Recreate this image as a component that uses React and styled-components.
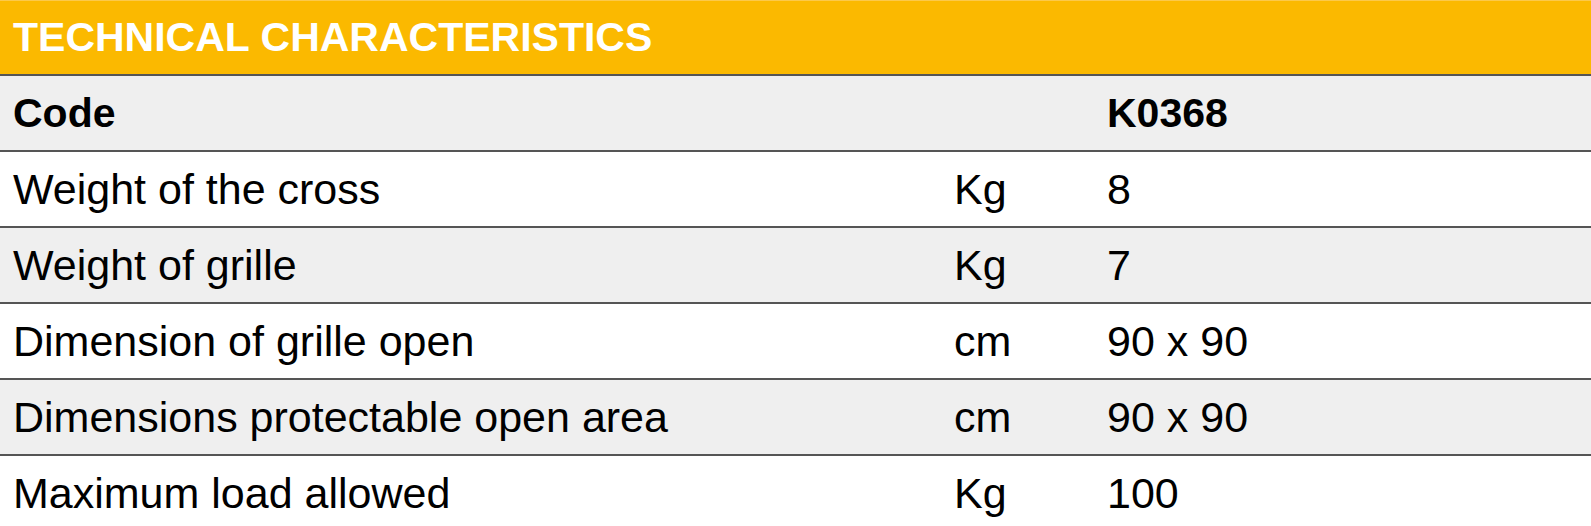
import React from 'react'
import styled, { createGlobalStyle } from 'styled-components'

const Global = createGlobalStyle`
  html, body {
    margin: 0;
    padding: 0;
    background: #ffffff;
  }
`

const Table = styled.div`
  width: 100%;
  font-family: "Liberation Sans", Arial, sans-serif;
  color: #000;
  border-top: 1px solid #fcc94a;
`

const Title = styled.div`
  height: 73px;
  background: #fbb900;
  border-bottom: 2px solid #555;
  display: flex;
  align-items: center;
  padding-left: 13px;
  color: #fff;
  font-weight: 700;
  font-size: 41px;
  line-height: 1;
`

const Row = styled.div`
  display: grid;
  grid-template-columns: 941px 153px 1fr;
  align-items: center;
  height: 74px;
  padding-left: 13px;
  background: ${({ $shade }) => ($shade ? '#efefef' : '#ffffff')};
  border-bottom: ${({ $last }) => ($last ? 'none' : '2px solid #555')};
  font-size: ${({ $bold }) => ($bold ? '41px' : '43px')};
  font-weight: ${({ $bold }) => ($bold ? 700 : 400)};
  line-height: 1;
`

const Cell = styled.span`
  white-space: nowrap;
`

const rows = [
  ['Weight of the cross', 'Kg', '8'],
  ['Weight of grille', 'Kg', '7'],
  ['Dimension of grille open', 'cm', '90 x 90'],
  ['Dimensions protectable open area', 'cm', '90 x 90'],
  ['Maximum load allowed', 'Kg', '100'],
]

const App = () => {
  return (
    <>
      <Global />
      <Table>
        <Title>TECHNICAL CHARACTERISTICS</Title>
        <Row $shade $bold>
          <Cell>Code</Cell>
          <Cell></Cell>
          <Cell>K0368</Cell>
        </Row>
        {rows.map((r, i) => (
          <Row key={r[0]} $shade={i % 2 === 1} $last={i === rows.length - 1}>
            <Cell>{r[0]}</Cell>
            <Cell>{r[1]}</Cell>
            <Cell>{r[2]}</Cell>
          </Row>
        ))}
      </Table>
    </>
  )
}

export default App
